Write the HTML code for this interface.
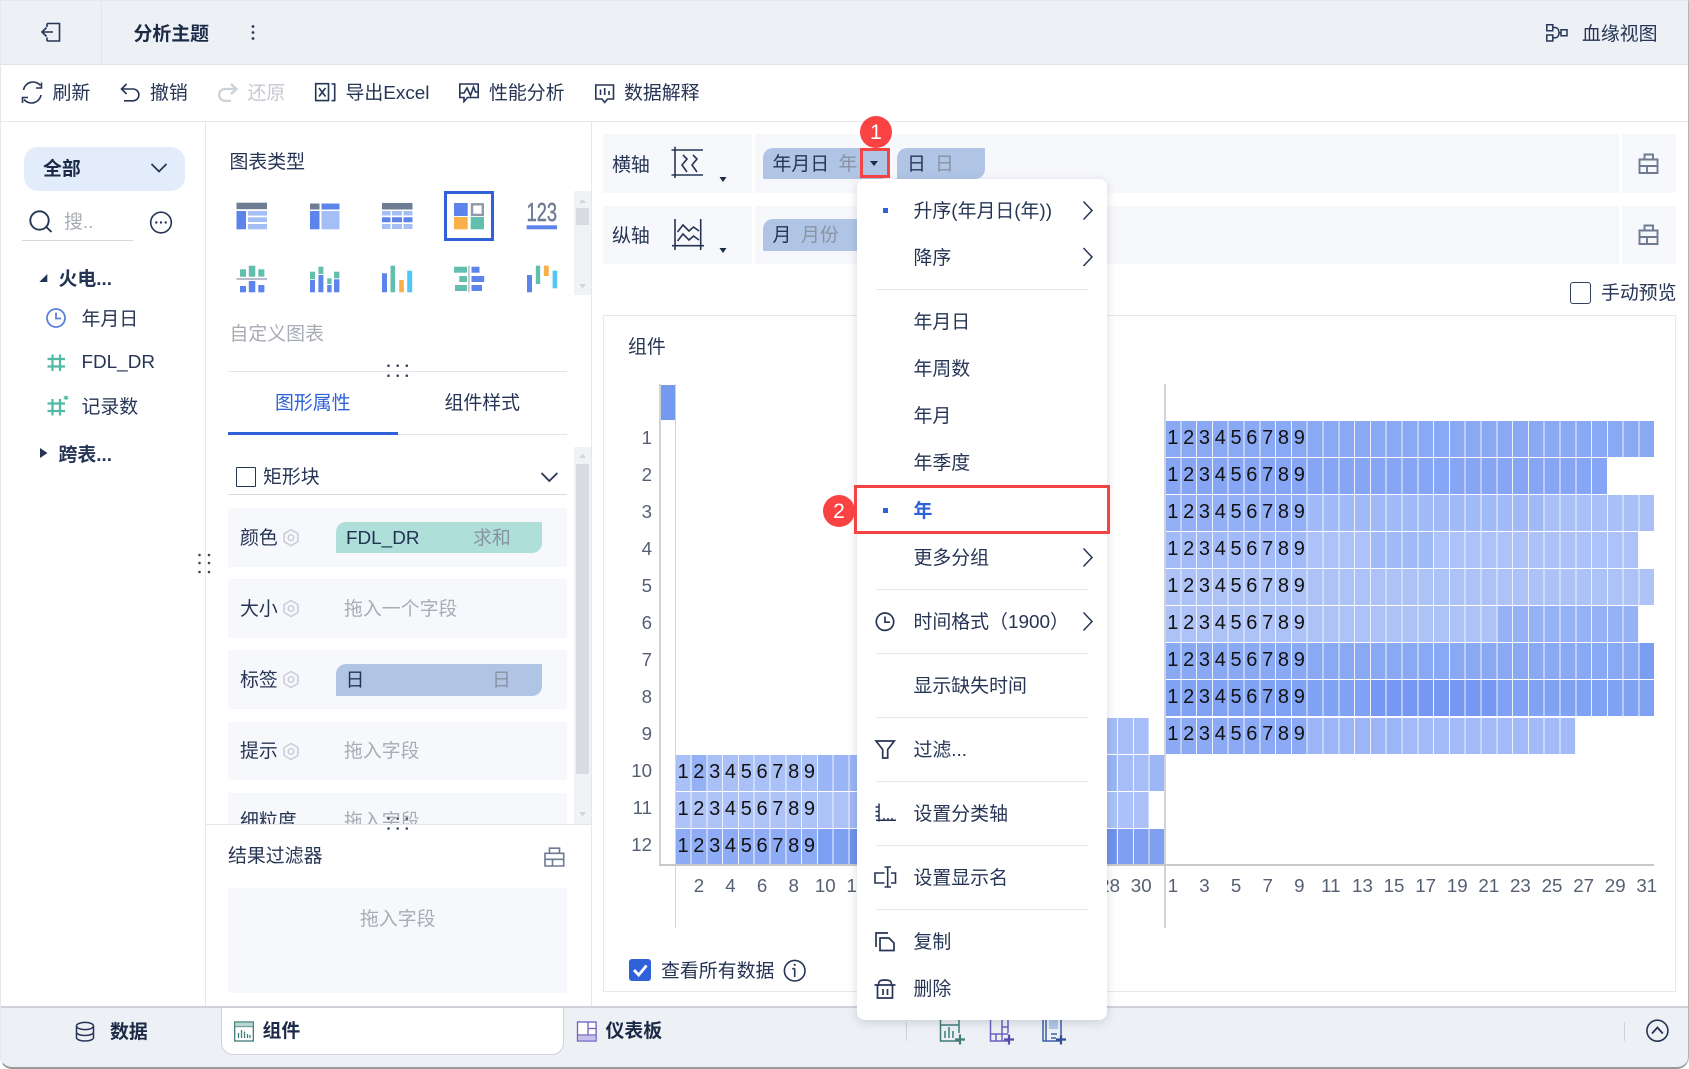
<!DOCTYPE html>
<html lang="zh"><head><meta charset="utf-8"><title>分析主题</title>
<style>
html,body{margin:0;padding:0;background:#fff}
#p{position:relative;width:1689px;height:1069px;overflow:hidden;background:#fff;font-family:"Liberation Sans","Noto Sans CJK SC",sans-serif;color:#263555;font-size:18.9px}
.t{position:absolute;white-space:nowrap;line-height:24px;margin-top:-10px;font-size:18.9px}
.b{font-weight:bold}
.g{color:#a8acb5}
.m{color:#8a93a3}
.r{position:absolute}
.rw{position:absolute;height:36px;line-height:34px;font-size:20px;letter-spacing:4.68px;padding-left:1.9px;box-sizing:border-box;color:#111;white-space:nowrap;background-image:var(--c)}
.pill{position:absolute;border-radius:10px 0 10px 0}
.yl{position:absolute;left:620px;width:32px;text-align:right;font-size:18.7px;line-height:24px;margin-top:-12px;color:#555f73}
.xl{position:absolute;top:874px;display:flex;font-size:18.7px;line-height:24px;color:#555f73}
.xl span{width:31.6px;text-align:center;flex:none}
svg{position:absolute;left:0;top:0;overflow:visible}
.ln{position:absolute;left:876px;width:211.5px;height:1px;background:#e6e8ee}
.rb{position:absolute;border:3px solid #f44343;box-sizing:border-box;z-index:8}
.bd{position:absolute;width:32px;height:32px;border-radius:50%;background:#f94343;color:#fff;text-align:center;line-height:33px;font-size:21px;z-index:9}
.wm{position:absolute;background:#fff;z-index:1}
</style></head><body><div id="p">

<!-- top bar -->
<div class="r" style="left:0;top:0;width:1689px;height:65px;background:#edf0f5;border-bottom:1px solid #e0e3ea;box-sizing:border-box"></div>
<div class="r" style="left:101px;top:1px;width:1px;height:63px;background:#e3e6ec"></div>
<div class="t b" style="left:133.5px;top:33px;color:#1c2a47">分析主题</div>
<div class="t" style="left:1582px;top:33px">血缘视图</div>

<!-- toolbar -->
<div class="r" style="left:0;top:121px;width:1689px;height:1px;background:#e6e8ee"></div>
<div class="t" style="left:52.5px;top:92px">刷新</div>
<div class="t" style="left:150px;top:92px">撤销</div>
<div class="t" style="left:247.5px;top:92px;color:#c5c9d2">还原</div>
<div class="t" style="left:345.5px;top:92px">导出Excel</div>
<div class="t" style="left:489px;top:92px">性能分析</div>
<div class="t" style="left:624px;top:92px">数据解释</div>

<!-- left panel -->
<div class="r" style="left:205px;top:122px;width:1px;height:885px;background:#e6e8ee"></div>
<div class="r" style="left:24px;top:147px;width:161px;height:44px;border-radius:14px;background:#e2ecfb"></div>
<div class="t b" style="left:43px;top:167.8px;color:#1c2a47">全部</div>
<div class="t g" style="left:64px;top:221px">搜..</div>
<div class="r" style="left:22px;top:240px;width:111px;height:1px;background:#d6d9e2"></div>
<div class="t b" style="left:58.5px;top:277.8px">火电...</div>
<div class="t" style="left:81.5px;top:318px">年月日</div>
<div class="t" style="left:81.5px;top:361px">FDL_DR</div>
<div class="t" style="left:81.5px;top:406px">记录数</div>
<div class="t b" style="left:58.5px;top:454px">跨表...</div>

<!-- mid panel -->
<div class="r" style="left:591px;top:122px;width:1px;height:885px;background:#e6e8ee"></div>
<div class="t" style="left:229.5px;top:161px">图表类型</div>
<div class="t g" style="left:229.5px;top:333px">自定义图表</div>
<div class="r" style="left:574px;top:191px;width:17px;height:104px;background:#f1f2f5"></div>
<div class="r" style="left:576px;top:208px;width:13px;height:17px;background:#d8dbe0"></div>
<div class="r" style="left:444px;top:191px;width:50px;height:50px;border:3px solid #2f62d9;box-sizing:border-box"></div>
<div class="r" style="left:228px;top:371px;width:339px;height:1px;background:#e3e6ee"></div>
<div class="t" style="left:275px;top:402px;color:#2f62d9">图形属性</div>
<div class="t" style="left:444.5px;top:402px">组件样式</div>
<div class="r" style="left:228px;top:434px;width:339px;height:1px;background:#e3e6ee"></div>
<div class="r" style="left:228px;top:432px;width:170px;height:3px;background:#2f62d9"></div>
<div class="r" style="left:236px;top:467px;width:19.5px;height:19.5px;border:1.8px solid #263555;box-sizing:border-box;border-radius:1px"></div>
<div class="t" style="left:263px;top:476px">矩形块</div>
<div class="r" style="left:228px;top:494px;width:339px;height:1px;background:#d6d9e2"></div>

<div class="r" style="left:228px;top:508px;width:339px;height:59px;background:#f7f8fc"></div>
<div class="r" style="left:228px;top:579px;width:339px;height:59px;background:#f7f8fc"></div>
<div class="r" style="left:228px;top:650px;width:339px;height:59px;background:#f7f8fc"></div>
<div class="r" style="left:228px;top:722px;width:339px;height:58px;background:#f7f8fc"></div>
<div class="r" style="left:228px;top:793px;width:339px;height:31px;background:#f7f8fc"></div>
<div class="t" style="left:240px;top:537px">颜色</div>
<div class="pill" style="left:336px;top:522px;width:206px;height:31px;background:#aedfd9"></div>
<div class="t" style="left:346px;top:537px;color:#233354">FDL_DR</div>
<div class="t m" style="left:473px;top:537px">求和</div>
<div class="t" style="left:240px;top:608px">大小</div>
<div class="t g" style="left:344px;top:608px">拖入一个字段</div>
<div class="t" style="left:240px;top:679px">标签</div>
<div class="pill" style="left:336px;top:664px;width:206px;height:32px;background:#b0c5e6"></div>
<div class="t" style="left:345.5px;top:679px">日</div>
<div class="t m" style="left:492px;top:679px">日</div>
<div class="t" style="left:240px;top:750px">提示</div>
<div class="t g" style="left:344px;top:750px">拖入字段</div>
<div class="r" style="left:206px;top:793px;width:368px;height:31px;overflow:hidden">
  <div class="t" style="left:34px;top:27px">细粒度</div>
  <div class="t g" style="left:138px;top:27px">拖入字段</div>
</div>
<div class="r" style="left:574px;top:447px;width:17px;height:377px;background:#f1f2f5"></div>
<div class="r" style="left:576px;top:464px;width:13px;height:310px;background:#d8dbe0"></div>
<div class="r" style="left:206px;top:824px;width:385px;height:1px;background:#e3e6ee"></div>
<div class="t" style="left:228px;top:855px">结果过滤器</div>
<div class="r" style="left:228px;top:888px;width:339px;height:105px;background:#f7f8fc"></div>
<div class="t g" style="left:360px;top:918px">拖入字段</div>

<!-- right: axes -->
<div class="r" style="left:603px;top:134px;width:1073px;height:59px;background:#f7f8fc"></div>
<div class="r" style="left:603px;top:206px;width:1073px;height:58px;background:#f7f8fc"></div>
<div class="r" style="left:752px;top:134px;width:3px;height:59px;background:#fff"></div>
<div class="r" style="left:752px;top:206px;width:3px;height:58px;background:#fff"></div>
<div class="r" style="left:1619px;top:134px;width:3px;height:59px;background:#fff"></div>
<div class="r" style="left:1619px;top:206px;width:3px;height:58px;background:#fff"></div>
<div class="t" style="left:612px;top:164px">横轴</div>
<div class="t" style="left:612px;top:235px">纵轴</div>
<div class="pill" style="left:763px;top:148px;width:127px;height:31px;background:#b0c5e6"></div>
<div class="t" style="left:772.5px;top:163px">年月日</div>
<div class="t m" style="left:838.5px;top:163px">年</div>
<div class="pill" style="left:897px;top:148px;width:88px;height:31px;background:#b0c5e6"></div>
<div class="t" style="left:907px;top:163px">日</div>
<div class="t m" style="left:935px;top:163px">日</div>
<div class="pill" style="left:763px;top:219px;width:120px;height:32px;background:#b0c5e6"></div>
<div class="t" style="left:772.5px;top:234px">月</div>
<div class="t m" style="left:801px;top:234px">月份</div>

<div class="r" style="left:1569.5px;top:282px;width:21.5px;height:22px;border:1.5px solid #33415f;border-radius:3px;box-sizing:border-box"></div>
<div class="t" style="left:1601px;top:292px">手动预览</div>

<!-- chart panel -->
<div class="r" style="left:603px;top:315px;width:1072.5px;height:677px;border:1px solid #e6e8ee;box-sizing:border-box"></div>
<div class="t" style="left:628px;top:346px">组件</div>
<div class="r" style="left:660px;top:385px;width:14.5px;height:35px;background:#749aef"></div>
<div class="r" style="left:659px;top:384px;width:2px;height:481px;background:#d2d3d6"></div>
<div class="r" style="left:674.5px;top:384px;width:1.5px;height:544px;background:#d2d3d6"></div>

<div class="yl" style="top:438px">1</div>
<div class="yl" style="top:475px">2</div>
<div class="yl" style="top:512px">3</div>
<div class="yl" style="top:549px">4</div>
<div class="yl" style="top:586px">5</div>
<div class="yl" style="top:623px">6</div>
<div class="yl" style="top:660px">7</div>
<div class="yl" style="top:697px">8</div>
<div class="yl" style="top:734px">9</div>
<div class="yl" style="top:771px">10</div>
<div class="yl" style="top:808px">11</div>
<div class="yl" style="top:845px">12</div>

<!-- left group cells -->
<div class="rw" style="left:865.2px;top:718px;width:284px;--c:linear-gradient(90deg,#a6bdf7 0 100%)"></div>
<div class="rw" style="left:675.6px;top:755px;width:489px;--c:linear-gradient(90deg,#aac1f8 0 15.8px,#95b1f5 15.8px 31.6px,#aac1f8 31.6px 142.2px,#9ab5f6 142.2px 440px,#a6bdf7 440px 474px,#9db7f6 474px)">123456789</div>
<div class="rw" style="left:675.6px;top:792px;width:473px;--c:linear-gradient(90deg,#aec4f8 0 142.2px,#adc3f8 142.2px 174px,#a0b8f5 174px 200px,#abc1f8 200px)">123456789</div>
<div class="rw" style="left:675.6px;top:829px;width:489px;--c:linear-gradient(90deg,#8eacf5 0 142.2px,#7ea0f2 142.2px 174px,#6f93ea 174px 440px,#7e9ff2 440px)">123456789</div>

<!-- right group cells -->
<div class="rw" style="left:1165.4px;top:421px;width:489px;--c:linear-gradient(90deg,#8aa9f5 0 100%)">123456789</div>
<div class="rw" style="left:1165.4px;top:458px;width:441.6px;--c:linear-gradient(90deg,#86a6f5 0 100%)">123456789</div>
<div class="rw" style="left:1165.4px;top:495px;width:489px;--c:linear-gradient(90deg,#93b0f6 0 142.2px,#a0b9f7 142.2px 379px,#a8bff8 379px)">123456789</div>
<div class="rw" style="left:1165.4px;top:532px;width:473px;--c:linear-gradient(90deg,#a2baf7 0 142.2px,#acc2f8 142.2px 205px,#a0b9f7 205px 268px,#acc2f8 268px)">123456789</div>
<div class="rw" style="left:1165.4px;top:569px;width:489px;--c:linear-gradient(90deg,#adc3f8 0 100%)">123456789</div>
<div class="rw" style="left:1165.4px;top:606px;width:473px;--c:linear-gradient(90deg,#adc3f8 0 332px,#96b2f6 332px)">123456789</div>
<div class="rw" style="left:1165.4px;top:643px;width:489px;--c:linear-gradient(90deg,#8aa9f5 0 474px,#7b9ef3 474px)">123456789</div>
<div class="rw" style="left:1165.4px;top:680px;width:489px;--c:linear-gradient(90deg,#80a2f4 0 205px,#7698f2 205px 332px,#80a2f4 332px)">123456789</div>
<div class="rw" style="left:1165.4px;top:718px;width:410px;line-height:32px;--c:linear-gradient(90deg,#8ba9f5 0 142.2px,#9bb5f6 142.2px 237px,#a2baf7 237px)">123456789</div>

<!-- cell gap lines -->
<svg width="1689" height="1069" viewBox="0 0 1689 1069" fill="none" stroke="#eef2fe" stroke-width="1" shape-rendering="crispEdges" style="z-index:1">
 <path d="M1180.8 421V864M1196.6 421V864M1212.4 421V864M1228.2 421V864M1244 421V864M1259.8 421V864M1275.6 421V864M1291.4 421V864M1307.2 421V864M1323 421V864M1338.8 421V864M1354.6 421V864M1370.4 421V864M1386.2 421V864M1402 421V864M1417.8 421V864M1433.6 421V864M1449.4 421V864M1465.2 421V864M1481 421V864M1496.8 421V864M1512.6 421V864M1528.4 421V864M1544.2 421V864M1560 421V864M1575.8 421V864M1591.6 421V864M1607.4 421V864M1623.2 421V864M1639 421V864"/>
 <path d="M691 755V864M706.8 755V864M722.6 755V864M738.4 755V864M754.2 755V864M770 755V864M785.8 755V864M801.6 755V864M817.4 755V864M833.2 755V864M849 755V864M1117.6 718V864M1133.4 718V864M1149.2 718V864"/>
</svg>
<!-- blank-area masks over gap lines -->
<div class="wm" style="left:1607px;top:458px;width:49px;height:37px"></div>
<div class="wm" style="left:1639px;top:532px;width:17px;height:37px"></div>
<div class="wm" style="left:1639px;top:606px;width:17px;height:37px"></div>
<div class="wm" style="left:1575.5px;top:718px;width:81px;height:37px"></div>
<div class="wm" style="left:1165.5px;top:754px;width:491px;height:110px"></div>
<div class="wm" style="left:1149px;top:718px;width:16px;height:37px"></div>
<div class="wm" style="left:1149px;top:792px;width:15.5px;height:36.5px"></div>
<div class="r" style="left:1164px;top:384px;width:1.5px;height:544px;background:#d2d3d6;z-index:1"></div>

<div class="r" style="left:659px;top:864px;width:995px;height:1.5px;background:#c6c8cc;z-index:1"></div>

<div class="xl" style="left:683.1px"><span>2</span><span>4</span><span>6</span><span>8</span><span>10</span><span>12</span><span>14</span><span>16</span><span>18</span><span>20</span><span>22</span><span>24</span><span>26</span><span>28</span><span>30</span></div>
<div class="xl" style="left:1157.1px"><span>1</span><span>3</span><span>5</span><span>7</span><span>9</span><span>11</span><span>13</span><span>15</span><span>17</span><span>19</span><span>21</span><span>23</span><span>25</span><span>27</span><span>29</span><span>31</span></div>

<div class="r" style="left:629px;top:959px;width:22px;height:22px;border-radius:3px;background:#2f62d9"></div>
<div class="t" style="left:661px;top:970px">查看所有数据</div>

<!-- bottom bar -->
<div class="r" style="left:0;top:1006px;width:1689px;height:63px;background:#edf0f5;border-top:2px solid #cfd2da;box-sizing:border-box;border-radius:0 0 12px 12px"></div>
<div class="r" style="left:220.5px;top:1006px;width:343px;height:49px;background:#fff;border:1px solid #cfd2da;border-top-width:2px;box-sizing:border-box;border-radius:0 0 12px 12px"></div>
<div class="t b" style="left:110px;top:1031px;color:#1c2a47">数据</div>
<div class="t b" style="left:262.5px;top:1030px;color:#1c2a47">组件</div>
<div class="t b" style="left:605.5px;top:1030px;color:#1c2a47">仪表板</div>
<div class="r" style="left:906px;top:1022px;width:1px;height:19px;background:#cfd2da"></div>
<div class="r" style="left:1623.5px;top:1022px;width:1px;height:19px;background:#cfd2da"></div>

<!-- page icons -->
<svg width="1689" height="1069" viewBox="0 0 1689 1069" fill="none" stroke="#263555" stroke-width="1.6" style="z-index:2">
 <!-- back -->
 <path d="M47 23.5H59.5V41H47M47 23.5V27M47 41V37.5M42 32H53M46.5 27.5L42 32L46.5 36.5"/>
 <g fill="#2b3a5a" stroke="none"><circle cx="253" cy="26.5" r="1.4"/><circle cx="253" cy="32.5" r="1.4"/><circle cx="253" cy="38.5" r="1.4"/></g>
 <!-- lineage -->
 <path d="M1546.8 24.7h6v6h-6zM1546.8 35h6v6h-6zM1561 29.7h6v6h-6zM1552.8 27.5h1.8c3.5 0 4.4 3 4.4 5.2s-.9 5.2-4.4 5.2h-1.8M1559 32.7h2" stroke-width="1.5"/>
 <!-- toolbar -->
 <path d="M23.5 90a9.7 9.7 0 0 1 17-4.5M41 95a9.7 9.7 0 0 1-17 4.5M41.5 82.5V88H36M22.5 103V97.5H28"/>
 <path d="M126.5 84L121.5 89L126.5 94M122 89H133a5.9 5.9 0 0 1 0 11.8H124"/>
 <path d="M231 84L236.5 89L231 94M236 89H225a5.9 5.9 0 0 0 0 11.8H231" stroke="#ccd0d8" stroke-width="2.2"/>
 <path d="M315.7 83.7H328.5V100.6H315.7ZM319 88L325.5 96.5M325.5 88L319 96.5M331.5 84H334.7V100.6H331.5"/>
 <path d="M459.8 84H478.2V97.5H467.5L464 101.5V97.5H459.8ZM460 93H464L467 88L470.5 95.5L473.5 87L475.5 92H478"/>
 <path d="M595.8 85H613.5V99H607.5L604.7 102.5L602 99H595.8ZM600.5 89.5V95M604.7 88V95M609 91V95"/>
 <!-- left panel -->
 <path d="M151.5 164L159 171.5L166.5 164" stroke-width="1.8"/>
 <circle cx="39.5" cy="220.5" r="9.2" stroke-width="1.9"/><path d="M46.3 227L51.5 232" stroke-width="1.9"/>
 <circle cx="161" cy="222.5" r="10.3"/>
 <g fill="#263555" stroke="none"><circle cx="156.3" cy="222.5" r="1.2"/><circle cx="161" cy="222.5" r="1.2"/><circle cx="165.7" cy="222.5" r="1.2"/>
 <path d="M47.3 274V282H39.3Z"/><path d="M40 448L47.5 453L40 458Z"/></g>
 <circle cx="56" cy="318" r="9" stroke="#5b82d4" stroke-width="1.8"/><path d="M56 312.5V318.5H61" stroke="#5b82d4" stroke-width="1.8"/>
 <path d="M52.5 354.5V371M60 354.5V371M47.5 359H65M47.5 366.5H65" stroke="#4fb9a3" stroke-width="2.2"/>
 <path d="M52.5 399V415.5M60 399V415.5M47.5 403.5H65M47.5 411H65" stroke="#4fb9a3" stroke-width="2.2"/>
 <path d="M66 395.5v4.5M63.8 396.5l4.4 2.5M68.2 396.5l-4.4 2.5" stroke="#4fb9a3" stroke-width="1.2"/>
 <!-- panel dots -->
 <g fill="#3a4660" stroke="none">
  <circle cx="199.5" cy="555" r="1.3"/><circle cx="199.5" cy="563" r="1.3"/><circle cx="199.5" cy="572" r="1.3"/>
  <circle cx="209" cy="555" r="1.3"/><circle cx="209" cy="563" r="1.3"/><circle cx="209" cy="572" r="1.3"/>
  <circle cx="388.5" cy="365.7" r="1.3"/><circle cx="397.7" cy="365.7" r="1.3"/><circle cx="406.8" cy="365.7" r="1.3"/>
  <circle cx="388.5" cy="375.7" r="1.3"/><circle cx="397.7" cy="375.7" r="1.3"/><circle cx="406.8" cy="375.7" r="1.3"/>
  <circle cx="388.5" cy="818.5" r="1.3"/><circle cx="397.7" cy="818.5" r="1.3"/><circle cx="406.8" cy="818.5" r="1.3"/>
  <circle cx="388.5" cy="828.5" r="1.3"/><circle cx="397.7" cy="828.5" r="1.3"/><circle cx="406.8" cy="828.5" r="1.3"/>
 </g>
 <!-- chart-type icons -->
 <g stroke="none">
  <rect x="236.5" y="202.7" width="30.5" height="6.5" fill="#6e7c94"/><rect x="236.5" y="211" width="9.5" height="18.3" fill="#5c84ea"/>
  <rect x="248" y="211" width="19" height="4.6" fill="#a3bff5"/><rect x="248" y="217.3" width="19" height="4.8" fill="#a3bff5"/><rect x="248" y="224" width="19" height="5.3" fill="#a3bff5"/>
  <rect x="310" y="203.5" width="9.5" height="6" fill="#6e7c94"/><rect x="321.5" y="203.5" width="18" height="6" fill="#5c84ea"/><rect x="310" y="211" width="9.5" height="18.3" fill="#5c84ea"/><rect x="321.5" y="211" width="18" height="18.3" fill="#a3bff5"/>
  <rect x="382" y="203" width="30.5" height="6.5" fill="#6e7c94"/>
  <path d="M382 211h8.5v4.5h-8.5zM392 211h10v4.5h-10zM403.5 211h9v4.5h-9zM382 224h8.5v5h-8.5zM392 224h10v5h-10zM403.5 224h9v5h-9z" fill="#a3bff5"/>
  <path d="M382 217.3h8.5v5h-8.5zM392 217.3h10v5h-10zM403.5 217.3h9v5h-9z" fill="#5c84ea"/>
  <rect x="454" y="203" width="13.7" height="13" fill="#5c84ea"/><rect x="454" y="217" width="13.7" height="12.3" fill="#f9b04a"/><rect x="470.7" y="217" width="13.3" height="12.3" fill="#62bfae"/>
  <rect x="526.6" y="225.3" width="30.4" height="4" fill="#5c84ea"/>
  <rect x="240" y="269.3" width="6" height="7.4" fill="#62bfae"/><rect x="248.8" y="265.7" width="6.5" height="11" fill="#62bfae"/><rect x="258.3" y="269.3" width="6.1" height="7.4" fill="#62bfae"/>
  <rect x="236.5" y="278" width="30.5" height="2" fill="#b5bdcc"/>
  <rect x="240" y="286" width="6" height="6.3" fill="#5c84ea"/><rect x="248.8" y="281" width="6.5" height="11.3" fill="#5c84ea"/><rect x="258.3" y="285" width="6.1" height="7.3" fill="#5c84ea"/>
  <rect x="310" y="271.7" width="5" height="7.6" fill="#62bfae"/><rect x="310" y="280" width="5" height="12.3" fill="#5c84ea"/>
  <rect x="318.4" y="266.7" width="5" height="7.3" fill="#62bfae"/><rect x="318.4" y="275" width="5" height="17.3" fill="#5c84ea"/>
  <rect x="327.2" y="278.3" width="4.4" height="5.7" fill="#62bfae"/><rect x="327.2" y="285" width="4.4" height="7.3" fill="#5c84ea"/>
  <rect x="334" y="271.7" width="5.4" height="6.6" fill="#62bfae"/><rect x="334" y="279.3" width="5.4" height="13" fill="#5c84ea"/>
  <rect x="382" y="273.3" width="5" height="19" fill="#5c84ea"/><rect x="390.5" y="265.7" width="4.6" height="26.6" fill="#62bfae"/><rect x="399.2" y="280" width="4.6" height="12.3" fill="#f9b04a"/><rect x="407.2" y="270.7" width="5" height="21.6" fill="#52c7f5"/>
  <rect x="454" y="266.7" width="13" height="6" fill="#62bfae"/><rect x="459.3" y="276" width="7.7" height="6" fill="#62bfae"/><rect x="455" y="285" width="12" height="6" fill="#62bfae"/>
  <rect x="468" y="265.7" width="1.8" height="26.6" fill="#c2c8d3"/>
  <rect x="471.5" y="266.7" width="8" height="6" fill="#5c84ea"/><rect x="471.5" y="276" width="12.7" height="6" fill="#5c84ea"/><rect x="471.5" y="285" width="10.5" height="6" fill="#5c84ea"/>
  <rect x="527" y="275" width="5" height="17.3" fill="#5c84ea"/><rect x="535.8" y="265.7" width="4.4" height="18.3" fill="#62bfae"/><rect x="543.8" y="265.7" width="5" height="10.3" fill="#f9b04a"/><rect x="552.6" y="270.7" width="4.6" height="17.6" fill="#52c7f5"/>
 </g>
 <rect x="472" y="204.3" width="10.8" height="10.6" stroke="#8f99ac" stroke-width="2.4"/>
 <text x="526.6" y="221" font-family="Liberation Sans" font-size="25.5" fill="#6e7c94" stroke="#6e7c94" stroke-width=".5" textLength="30.4" lengthAdjust="spacingAndGlyphs">123</text>
 <!-- scroll arrows -->
 <g fill="#d3d6dc" stroke="none"><path d="M579 203L582.5 199L586 203Z"/><path d="M579 284L582.5 288.5L586 284Z"/><path d="M579 458L582.5 454L586 458Z"/><path d="M579 812L582.5 816.5L586 812Z"/></g>
 <!-- 矩形块 chevron -->
 <path d="M541.5 473L549.3 481L557.3 473" stroke-width="1.8"/>
 <!-- gears -->
 <g stroke="#c8ccd4" stroke-width="1.5">
  <g transform="translate(291 537.7)"><path d="M0-8L6.9-4V4L0 8L-6.9 4V-4Z"/><circle r="2.8"/></g>
  <g transform="translate(291 608.5)"><path d="M0-8L6.9-4V4L0 8L-6.9 4V-4Z"/><circle r="2.8"/></g>
  <g transform="translate(291 679.5)"><path d="M0-8L6.9-4V4L0 8L-6.9 4V-4Z"/><circle r="2.8"/></g>
  <g transform="translate(291 751.5)"><path d="M0-8L6.9-4V4L0 8L-6.9 4V-4Z"/><circle r="2.8"/></g>
 </g>
 <!-- lock/brush icons -->
 <g stroke="#6e7a90" stroke-width="1.9">
  <path d="M1644.5 159.5V154.5H1653V159.5M1639.5 159.5H1657.5V173H1639.5ZM1639.5 166H1657.5M1647 166V173"/>
  <path d="M1644.5 230.5V225.5H1653V230.5M1639.5 230.5H1657.5V244H1639.5ZM1639.5 237H1657.5M1647 237V244"/>
 </g>
 <path d="M549.5 853.3V848.2H559.5V853.3M545 853.3H563.7V866H545ZM545 859.3H563.7M552.5 859.3V866" stroke="#6e7a90" stroke-width="1.6"/>
 <!-- axis icons -->
 <path d="M675 146.7V178M671.5 150H703M671.5 175H703M683 155L687 159L682 165L687 172M693 155L697 159L692 165L697 172"/>
 <path d="M675 219V250M700.7 219V250M672 245.7H704M677.5 232L683 225L689 231L693.5 227L699 231M677.5 241L683 234L689 240L693.5 236L699 240"/>
 <g fill="#1c2a47" stroke="none"><path d="M719.5 177H726.5L723 182Z"/><path d="M719.5 248H726.5L723 253Z"/></g>
 <!-- info + check -->
 <circle cx="794.7" cy="970.7" r="10.3"/><path d="M794.7 968.5V977M792.2 968.7H794.7"/><circle cx="794.7" cy="964.8" r="1.1" fill="#263555" stroke="none"/>
 <path d="M634 970L638.7 975L646.5 965.5" stroke="#fff" stroke-width="2.8"/>
 <!-- bottom icons -->
 <g stroke-width="1.5">
  <ellipse cx="85" cy="1026" rx="8.5" ry="3.6"/><path d="M76.5 1026V1037.5C76.5 1039.5 80 1041 85 1041S93.5 1039.5 93.5 1037.5V1026M76.5 1032C76.5 1034 80 1035.5 85 1035.5S93.5 1034 93.5 1032"/>
 </g>
 <g stroke="#3f7d78" stroke-width="1.3">
  <rect x="234.7" y="1022" width="18.6" height="19" fill="#fff"/><path d="M234.7 1026.5H253.3"/><rect x="235.3" y="1022.6" width="17.4" height="3.8" fill="#b8d6d1" stroke="none"/>
  <path d="M238.5 1038V1033M241.5 1038V1030M244.5 1038V1031.5M247.5 1038V1034M250 1038V1035"/>
 </g>
 <g stroke="#6d5fc0" stroke-width="1.3"><rect x="577.5" y="1022" width="18.6" height="19" fill="#fff"/><path d="M588 1022V1035M577.5 1035H596M596 1028.5H588M583.7 1035V1041M590 1035V1041"/><rect x="578.2" y="1035.6" width="17.4" height="4.8" fill="#c6c1ea" stroke="none"/></g>
 <g stroke="#3f7d78" stroke-width="1.5"><path d="M940.5 1020V1041H959M959 1020V1033M940.5 1025H959M945 1038V1031M949 1038V1027M953 1038V1031"/><path d="M955 1039.5H965M960 1034.5V1044.5" stroke-width="2.2"/></g>
 <g stroke="#6d5fc0" stroke-width="1.5"><path d="M990.5 1020V1041H1008M1008 1020V1033M990.5 1034H1008M1002 1020V1034M1002 1027H1008M996 1034V1041M1002 1034V1041"/><path d="M1004 1039.5H1014M1009 1034.5V1044.5" stroke="#5a49ad" stroke-width="2.2"/></g>
 <g stroke="#3d5fa6" stroke-width="1.5"><path d="M1043 1020V1041H1061M1061 1020V1034M1046 1020V1041M1051 1034H1057M1051 1038H1056"/><rect x="1049" y="1020" width="9" height="9" fill="#b0c5e6" stroke="none"/><path d="M1056 1039.5H1066M1061 1034.5V1044.5" stroke="#2f5096" stroke-width="2.2"/></g>
 <circle cx="1657.4" cy="1030.7" r="10.5"/><path d="M1652 1033.5L1657.4 1027.5L1662.8 1033.5" stroke-width="1.8"/>
</svg>

<!-- menu -->
<div class="r" style="left:857px;top:179px;width:250px;height:841px;background:#fff;border-radius:8px;box-shadow:0 2px 10px rgba(40,50,80,.18);z-index:5"></div>
<div class="r" style="left:0;top:0;width:1689px;height:1069px;z-index:6;pointer-events:none">
 <div class="t" style="left:913.5px;top:210px">升序(年月日(年))</div>
 <div class="t" style="left:913.5px;top:257px">降序</div>
 <div class="ln" style="top:289px"></div>
 <div class="t" style="left:913.5px;top:321px">年月日</div>
 <div class="t" style="left:913.5px;top:368px">年周数</div>
 <div class="t" style="left:913.5px;top:415px">年月</div>
 <div class="t" style="left:913.5px;top:462px">年季度</div>
 <div class="t b" style="left:913.5px;top:510px;color:#2f62d9">年</div>
 <div class="t" style="left:913.5px;top:557px">更多分组</div>
 <div class="ln" style="top:589px"></div>
 <div class="t" style="left:913.5px;top:621px;text-spacing-trim:space-all;font-kerning:none;font-feature-settings:'palt' 0,'chws' 0">时间格式（1900）</div>
 <div class="ln" style="top:653px"></div>
 <div class="t" style="left:913.5px;top:685px">显示缺失时间</div>
 <div class="ln" style="top:717px"></div>
 <div class="t" style="left:913.5px;top:749px">过滤...</div>
 <div class="ln" style="top:781px"></div>
 <div class="t" style="left:913.5px;top:813px">设置分类轴</div>
 <div class="ln" style="top:845px"></div>
 <div class="t" style="left:913.5px;top:877px">设置显示名</div>
 <div class="ln" style="top:909px"></div>
 <div class="t" style="left:913.5px;top:941px">复制</div>
 <div class="t" style="left:913.5px;top:988px">删除</div>
 <div class="r" style="left:882.5px;top:207.5px;width:5px;height:5px;background:#2f62d9"></div>
 <div class="r" style="left:882.5px;top:507.5px;width:5px;height:5px;background:#2f62d9"></div>
 <svg width="1689" height="1069" viewBox="0 0 1689 1069" fill="none" stroke="#263555" stroke-width="1.5">
  <path d="M1083.5 201.5L1092 210.5L1083.5 219.5M1083.5 248L1092 257L1083.5 266M1083.5 548.5L1092 557.5L1083.5 566.5M1083.5 612.5L1092 621.5L1083.5 630.5"/>
  <circle cx="885" cy="621.7" r="8.7" stroke-width="1.7"/><path d="M885 616.5V622.2H890" stroke-width="1.7"/>
  <path d="M876 741H894.3L887.7 749.5V758H882.7V749.5Z" stroke-width="1.7"/>
  <path d="M879 803.5V821.5M875.5 807H879M875.5 811.5H879M875.5 816H879M876 820.3H896M884 818V820.3M888 818V820.3M892 818V820.3"/>
  <path d="M884.5 873H875V883H884.5M891 873H895.5V883H891M887.7 867V887M884.5 867H891M884.5 887H891" stroke-width="1.6"/>
  <path d="M880 938H889L894 943V950.5H880ZM876 947V933H888" stroke-width="1.7"/>
  <path d="M874.5 985H895.5M878.5 985C878.5 981 880 980 885 980S891.5 981 891.5 985M877.5 985V998H892.5V985M883 989V995M887.5 989V995" stroke-width="1.7"/>
 </svg>
</div>

<!-- annotations -->
<div class="rb" style="left:860px;top:148px;width:30px;height:29.5px;background:transparent"></div>
<div class="r" style="left:869.5px;top:161px;width:0;height:0;border-left:4.2px solid transparent;border-right:4.2px solid transparent;border-top:5.5px solid #1c2a47;z-index:8"></div>
<div class="bd" style="left:860px;top:116px">1</div>
<div class="rb" style="left:854px;top:485px;width:256px;height:49px"></div>
<div class="bd" style="left:823px;top:494.5px">2</div>

<!-- frame -->
<div class="r" style="left:0;top:0;width:1689px;height:1069px;box-sizing:border-box;border:1px solid #e6e8ec;border-right-color:#b5b5b5;border-bottom:2px solid #999;border-radius:0 0 12px 12px;z-index:10;pointer-events:none"></div>
</div></body></html>
